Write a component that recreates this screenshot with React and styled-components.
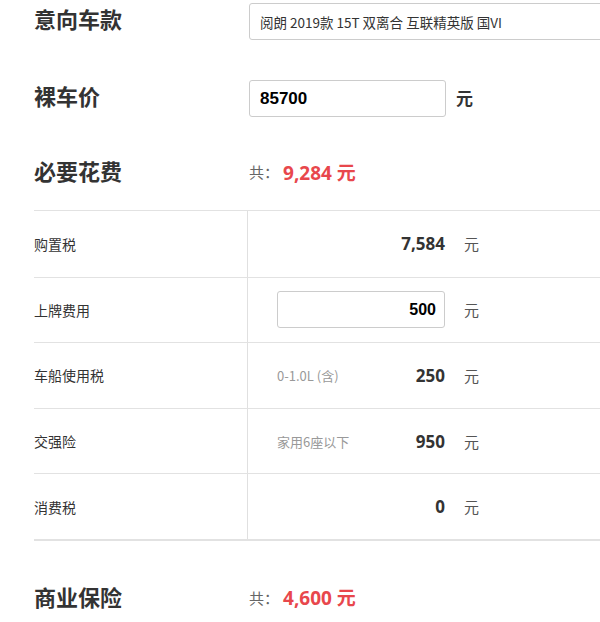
import React from "react";
import styled, { createGlobalStyle } from "styled-components";

const GlobalStyle = createGlobalStyle`
  html, body {
    margin: 0;
    padding: 0;
    background: #fff;
    overflow: hidden;
  }
  body {
    font-family: "Noto Sans", "Noto Sans CJK SC", sans-serif;
    color: #333;
  }
  * { box-sizing: border-box; }
`;

const Page = styled.div`
  width: 600px;
  overflow: hidden;
  padding-left: 34px;
  padding-top: 3px;
`;

const FormRow = styled.div`
  display: grid;
  grid-template-columns: 215px 1fr;
  align-items: center;
  height: 37px;
  margin-top: ${(p) => p.$gap || 0}px;
`;

const Heading = styled.div`
  font-family: "Noto Sans CJK SC", sans-serif;
  font-size: 22px;
  font-weight: 700;
  color: #333;
  line-height: 1;
  padding-bottom: 7px;
`;

const SelectBox = styled.div`
  width: 420px;
  height: 37px;
  border: 1px solid #ccc;
  border-radius: 3px;
  display: flex;
  align-items: center;
  padding-left: 10px;
  font-size: 13.5px;
  color: #333;
  font-family: "Noto Sans CJK SC", sans-serif;
  white-space: nowrap;
`;

const InlineGroup = styled.div`
  display: flex;
  align-items: center;
  padding-bottom: ${(p) => p.$lift || 0}px;
`;

const PriceInput = styled.input`
  width: 197px;
  height: 37px;
  border: 1px solid #ccc;
  border-radius: 3px;
  padding: 0 10px;
  font-family: "Liberation Sans", Arial, sans-serif;
  font-weight: 700;
  font-size: 17px;
  color: #000;
  outline: none;
  background: #fff;
`;

const BigUnit = styled.span`
  margin-left: 10px;
  font-family: "Noto Sans CJK SC", sans-serif;
  font-size: 17px;
  font-weight: 700;
  color: #333;
  padding-bottom: 3px;
`;

const TotalLabel = styled.span`
  font-family: "Noto Sans CJK SC", sans-serif;
  font-size: 15px;
  color: #666;
`;

const TotalValue = styled.span`
  margin-left: 4px;
  font-family: "Noto Sans", "Noto Sans CJK SC", sans-serif;
  font-size: 19px;
  font-weight: 700;
  color: #e8474c;
`;

const Table = styled.div`
  margin-top: 18px;
  border-top: 1px solid #e2e2e2;
  border-bottom: 2px solid #e2e2e2;
`;

const TableRow = styled.div`
  display: grid;
  grid-template-columns: 214px 1fr;
  height: 65.6px;
  & + & {
    border-top: 1px solid #e2e2e2;
  }
`;

const LabelCell = styled.div`
  display: flex;
  align-items: center;
  border-right: 1px solid #e0e0e0;
  font-family: "Noto Sans CJK SC", sans-serif;
  font-size: 14px;
  color: #333;
`;

const ValueCell = styled.div`
  display: flex;
  align-items: center;
  padding-left: 29px;
`;

const Field = styled.div`
  width: 168px;
  display: flex;
  align-items: center;
  justify-content: space-between;
`;

const Hint = styled.span`
  font-family: "Noto Sans CJK SC", sans-serif;
  font-size: 13px;
  color: #999;
`;

const Amount = styled.span`
  margin-left: auto;
  font-family: "Noto Sans", sans-serif;
  font-size: 17px;
  font-weight: 700;
  color: #333;
`;

const FeeInput = styled.input`
  width: 168px;
  height: 37px;
  border: 1px solid #ccc;
  border-radius: 3px;
  padding: 0 8px;
  text-align: right;
  font-family: "Liberation Sans", Arial, sans-serif;
  font-weight: 700;
  font-size: 16px;
  color: #000;
  outline: none;
  background: #fff;
`;

const Unit = styled.span`
  margin-left: 19px;
  font-family: "Noto Sans CJK SC", sans-serif;
  font-size: 15px;
  color: #555;
`;

const fees = [
  { label: "购置税", value: "7,584" },
  { label: "上牌费用", value: "500", editable: true },
  { label: "车船使用税", value: "250", hint: "0-1.0L (含)" },
  { label: "交强险", value: "950", hint: "家用6座以下" },
  { label: "消费税", value: "0" },
];

export default function App() {
  return (
    <>
      <GlobalStyle />
      <Page>
        <FormRow>
          <Heading>意向车款</Heading>
          <SelectBox>阅朗 2019款 15T 双离合 互联精英版 国VI</SelectBox>
        </FormRow>
        <FormRow $gap={40}>
          <Heading>裸车价</Heading>
          <InlineGroup>
            <PriceInput defaultValue="85700" />
            <BigUnit>元</BigUnit>
          </InlineGroup>
        </FormRow>
        <FormRow $gap={38}>
          <Heading>必要花费</Heading>
          <InlineGroup $lift={4}>
            <TotalLabel>共：</TotalLabel>
            <TotalValue>9,284 元</TotalValue>
          </InlineGroup>
        </FormRow>
        <Table>
          {fees.map((f) => (
            <TableRow key={f.label}>
              <LabelCell>{f.label}</LabelCell>
              <ValueCell>
                {f.editable ? (
                  <FeeInput defaultValue={f.value} />
                ) : (
                  <Field>
                    {f.hint && <Hint>{f.hint}</Hint>}
                    <Amount>{f.value}</Amount>
                  </Field>
                )}
                <Unit>元</Unit>
              </ValueCell>
            </TableRow>
          ))}
        </Table>
        <FormRow $gap={40}>
          <Heading>商业保险</Heading>
          <InlineGroup $lift={4}>
            <TotalLabel>共：</TotalLabel>
            <TotalValue>4,600 元</TotalValue>
          </InlineGroup>
        </FormRow>
      </Page>
    </>
  );
}
